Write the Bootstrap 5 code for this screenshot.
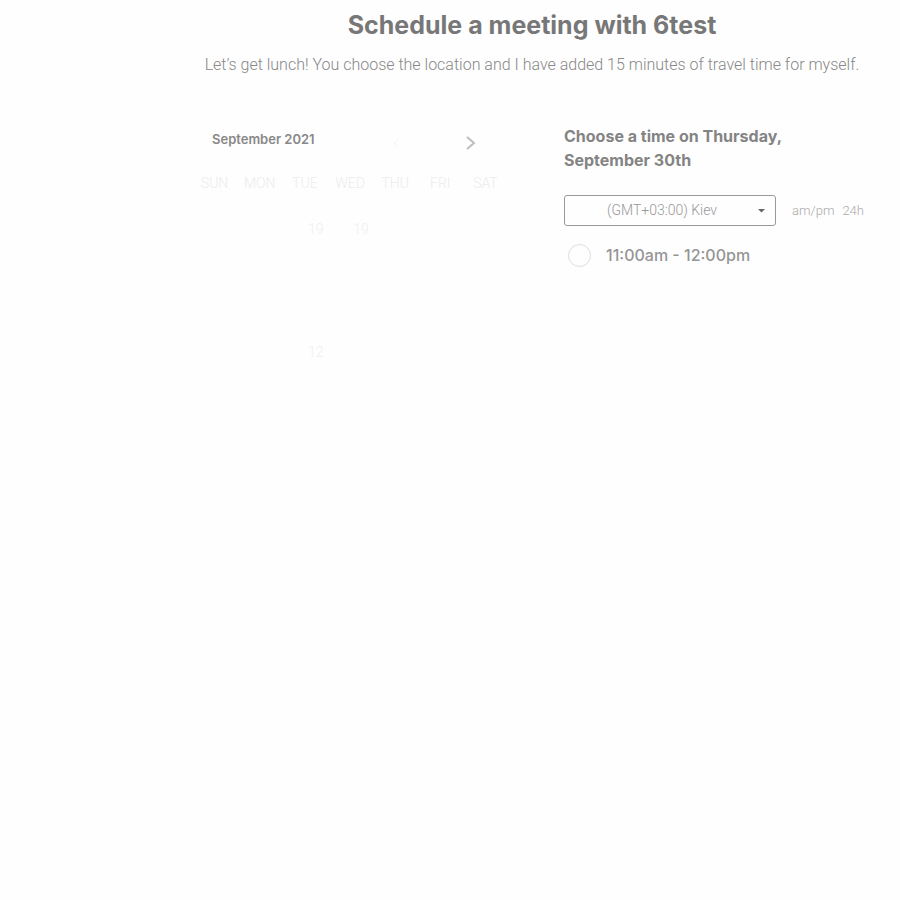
<!DOCTYPE html>
<html lang="en">
<head>
<meta charset="utf-8">
<meta name="viewport" content="width=device-width, initial-scale=1">
<title>Schedule a meeting</title>
<link href="https://cdn.jsdelivr.net/npm/bootstrap@5.3.0/dist/css/bootstrap.min.css" rel="stylesheet">
<style>
body { background: #fefefe; color: #777; font-family: Inter, "Liberation Sans", sans-serif; }
.page-main { margin-left: 164px; padding: 9px 28px 40px; }
.page-title { font-size: 25px; line-height: 32px; font-weight: 700; margin-bottom: 13px; }
.intro { font-family: Roboto, sans-serif; font-size: 16px; line-height: 22px; font-weight: 300; color: #888; margin: 0 -12px 48px; }
.schedule { display: grid; grid-template-columns: 316px minmax(0, 1fr); column-gap: 56px; }
.month-bar { padding: 0 31px 0 20px; height: 34px; }
.month-name { font-size: 13px; line-height: 20px; font-weight: 600; color: #888; margin: 5px 0 0; }
.month-nav { padding-top: 12px; }
.calendar { table-layout: fixed; width: 100%; }
.calendar th, .calendar td { font-family: Roboto, sans-serif; font-weight: 300; padding: 0; text-align: center; }
.calendar th { font-size: 14px; height: 51px; color: #ececec; }
.calendar td { font-size: 14px; height: 41px; color: #f0f0f0; padding-left: 22px; }
.time-title { font-size: 16px; line-height: 24px; font-weight: 700; color: #848484; margin-bottom: 23px; }
.zone-select { width: 212px; height: 31px; border: 1px solid #999; border-radius: 3px; background: transparent; color: #999; font-family: Roboto, sans-serif; font-size: 14px; font-weight: 300; text-align: center; text-align-last: center; appearance: none; padding: 0 36px 0 20px; }
.zone-arrow { position: absolute; right: 11px; top: 14px; pointer-events: none; }
.zone-row { margin-bottom: 17px; }
.format-btn { font-family: Roboto, sans-serif; font-size: 13px; font-weight: 300; color: #aaa; }
.slot-radio { appearance: none; width: 23px; height: 23px; border: 1px solid #ddd; border-radius: 50%; margin: 0; }
.slot-label { font-size: 16px; line-height: 24px; font-weight: 500; color: #959595; padding-left: 15px; }
</style>
<script src="https://cdn.jsdelivr.net/npm/bootstrap@5.3.0/dist/js/bootstrap.bundle.min.js"></script>
</head>
<body>
<main class="page-main">
  <header class="text-center">
    <h1 class="page-title">Schedule a meeting with 6test</h1>
    <p class="intro">Let’s get lunch! You choose the location and I have added 15 minutes of travel time for myself.</p>
  </header>
  <div class="schedule">
    <section aria-label="Calendar">
      <div class="month-bar d-flex justify-content-between align-items-start">
        <h2 class="month-name">September 2021</h2>
        <div class="month-nav d-flex gap-5">
          <button type="button" class="btn border-0 p-0 d-flex me-3" aria-label="Previous month"><svg width="12" height="14" viewBox="0 0 12 14" fill="none" stroke="#f4f4f4"><path d="M9 3 5 7l4 4"/></svg></button>
          <button type="button" class="btn border-0 p-0 d-flex" aria-label="Next month"><svg width="12" height="14" viewBox="0 0 12 14" fill="none" stroke="#bdbdbd" stroke-width="2"><path d="m2 1 7 6-7 6"/></svg></button>
        </div>
      </div>
      <table class="calendar">
        <thead><tr><th>SUN</th><th>MON</th><th>TUE</th><th>WED</th><th>THU</th><th>FRI</th><th>SAT</th></tr></thead>
        <tbody>
          <tr><td></td><td></td><td>19</td><td>19</td><td></td><td></td><td></td></tr>
          <tr><td></td><td></td><td></td><td></td><td></td><td></td><td></td></tr>
          <tr><td></td><td></td><td></td><td></td><td></td><td></td><td></td></tr>
          <tr><td></td><td></td><td>12</td><td></td><td></td><td></td><td></td></tr>
        </tbody>
      </table>
    </section>
    <section>
      <h2 class="time-title">Choose a time on Thursday,<br>September 30th</h2>
      <div class="zone-row d-flex align-items-center gap-3">
        <div class="position-relative">
          <select class="zone-select d-block" aria-label="Time zone"><option>(GMT+03:00) Kiev</option></select>
          <svg class="zone-arrow" width="7" height="4" viewBox="0 0 7 4"><path d="M0 0h7L3.5 3.5z" fill="#666"/></svg>
        </div>
        <div class="d-flex gap-2">
          <button type="button" class="btn border-0 p-0 format-btn">am/pm</button>
          <button type="button" class="btn border-0 p-0 format-btn">24h</button>
        </div>
      </div>
      <div class="d-flex align-items-center ps-1">
        <input class="slot-radio" type="radio" name="slot" id="slot-1">
        <label class="slot-label" for="slot-1">11:00am - 12:00pm</label>
      </div>
    </section>
  </div>
</main>
</body>
</html>
